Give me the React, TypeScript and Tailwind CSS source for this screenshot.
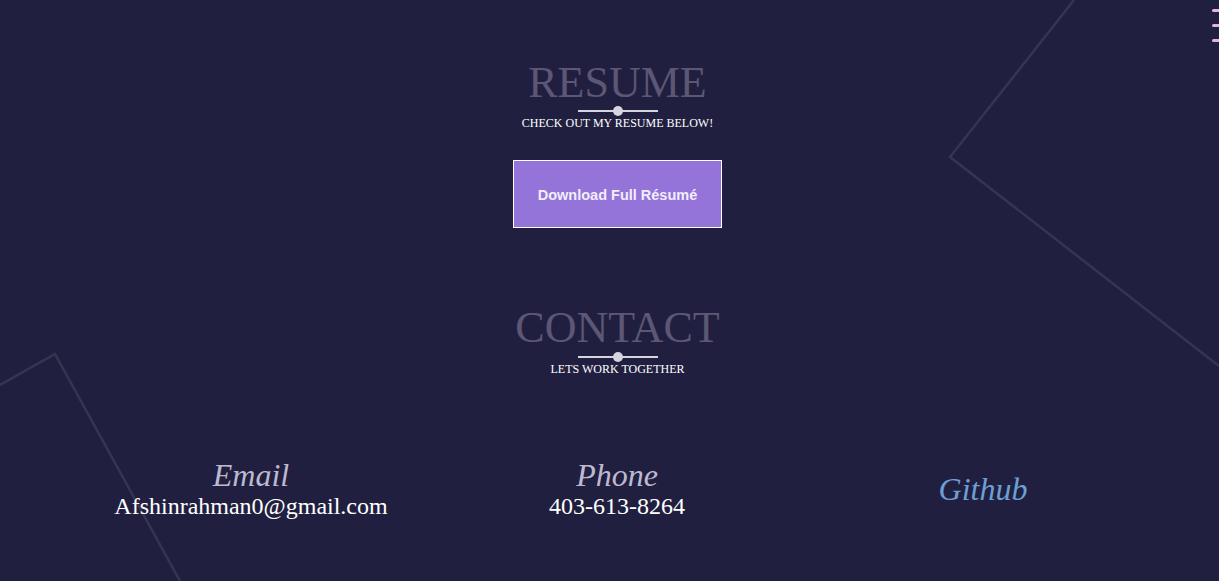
import React from "react";

function Divider({ className = "" }: { className?: string }) {
  return (
    <div className={`relative mx-auto flex h-[10px] w-[80px] items-center ${className}`}>
      <div className="h-[2px] w-full bg-[#d6d4de]" />
      <div className="absolute left-[35px] top-0 h-[10px] w-[10px] rounded-full bg-[#d6d4de]" />
    </div>
  );
}

export default function App() {
  return (
    <div
      className="relative h-[581px] w-full overflow-hidden bg-[#211f40]"
      style={{ fontFamily: '"Liberation Serif", "Times New Roman", serif' }}
    >
      <svg
        className="pointer-events-none absolute inset-0"
        width="1219"
        height="581"
        viewBox="0 0 1219 581"
        fill="none"
      >
        <polyline points="1074,0 950,157 1219,366" stroke="#37354e" strokeWidth="2.5" />
        <polyline points="0,385 55,354 180,581" stroke="#37354e" strokeWidth="2.5" />
      </svg>

      <div className="absolute right-0 top-[9px] flex w-[7px] flex-col gap-[12px]">
        <div className="h-[3px] w-full rounded-l-sm bg-[#e7b1df]" />
        <div className="h-[3px] w-full rounded-l-sm bg-[#e7b1df]" />
        <div className="h-[3px] w-full rounded-l-sm bg-[#e7b1df]" />
      </div>

      <div className="relative flex flex-col items-center pl-[16px] pt-[61px]">
        <h2 className="text-[44px] leading-[44px] text-[#5b5774]">RESUME</h2>
        <Divider className="mt-[1px]" />
        <p className="mt-[1px] text-[12px] leading-[12px] text-white">CHECK OUT MY RESUME BELOW!</p>

        <button
          className="mt-[31px] flex h-[68px] w-[209px] items-center justify-center border border-white bg-[#9574da] pt-[3px] text-[14.5px] font-bold text-[#f1eefa]"
          style={{ fontFamily: '"Liberation Sans", Arial, sans-serif' }}
        >
          Download Full Résumé
        </button>

        <h2 className="mt-[78px] text-[44px] leading-[44px] text-[#5b5774]">CONTACT</h2>
        <Divider className="mt-[2px]" />
        <p className="mt-[1px] text-[12px] leading-[12px] text-white">LETS WORK TOGETHER</p>
      </div>

      <div className="relative ml-[68px] mt-[84px] grid w-[1098px] grid-cols-3 items-center">
        <div className="flex flex-col items-center">
          <span className="text-[32px] italic leading-[32px] text-[#bdb9d0]">Email</span>
          <span className="mt-[3px] text-[24px] leading-[24px] text-white">Afshinrahman0@gmail.com</span>
        </div>
        <div className="flex flex-col items-center">
          <span className="text-[32px] italic leading-[32px] text-[#bdb9d0]">Phone</span>
          <span className="mt-[3px] text-[24px] leading-[24px] text-white">403-613-8264</span>
        </div>
        <div className="flex flex-col items-center">
          <span className="text-[32px] italic leading-[32px] text-[#6c9fd2]">Github</span>
        </div>
      </div>
    </div>
  );
}
